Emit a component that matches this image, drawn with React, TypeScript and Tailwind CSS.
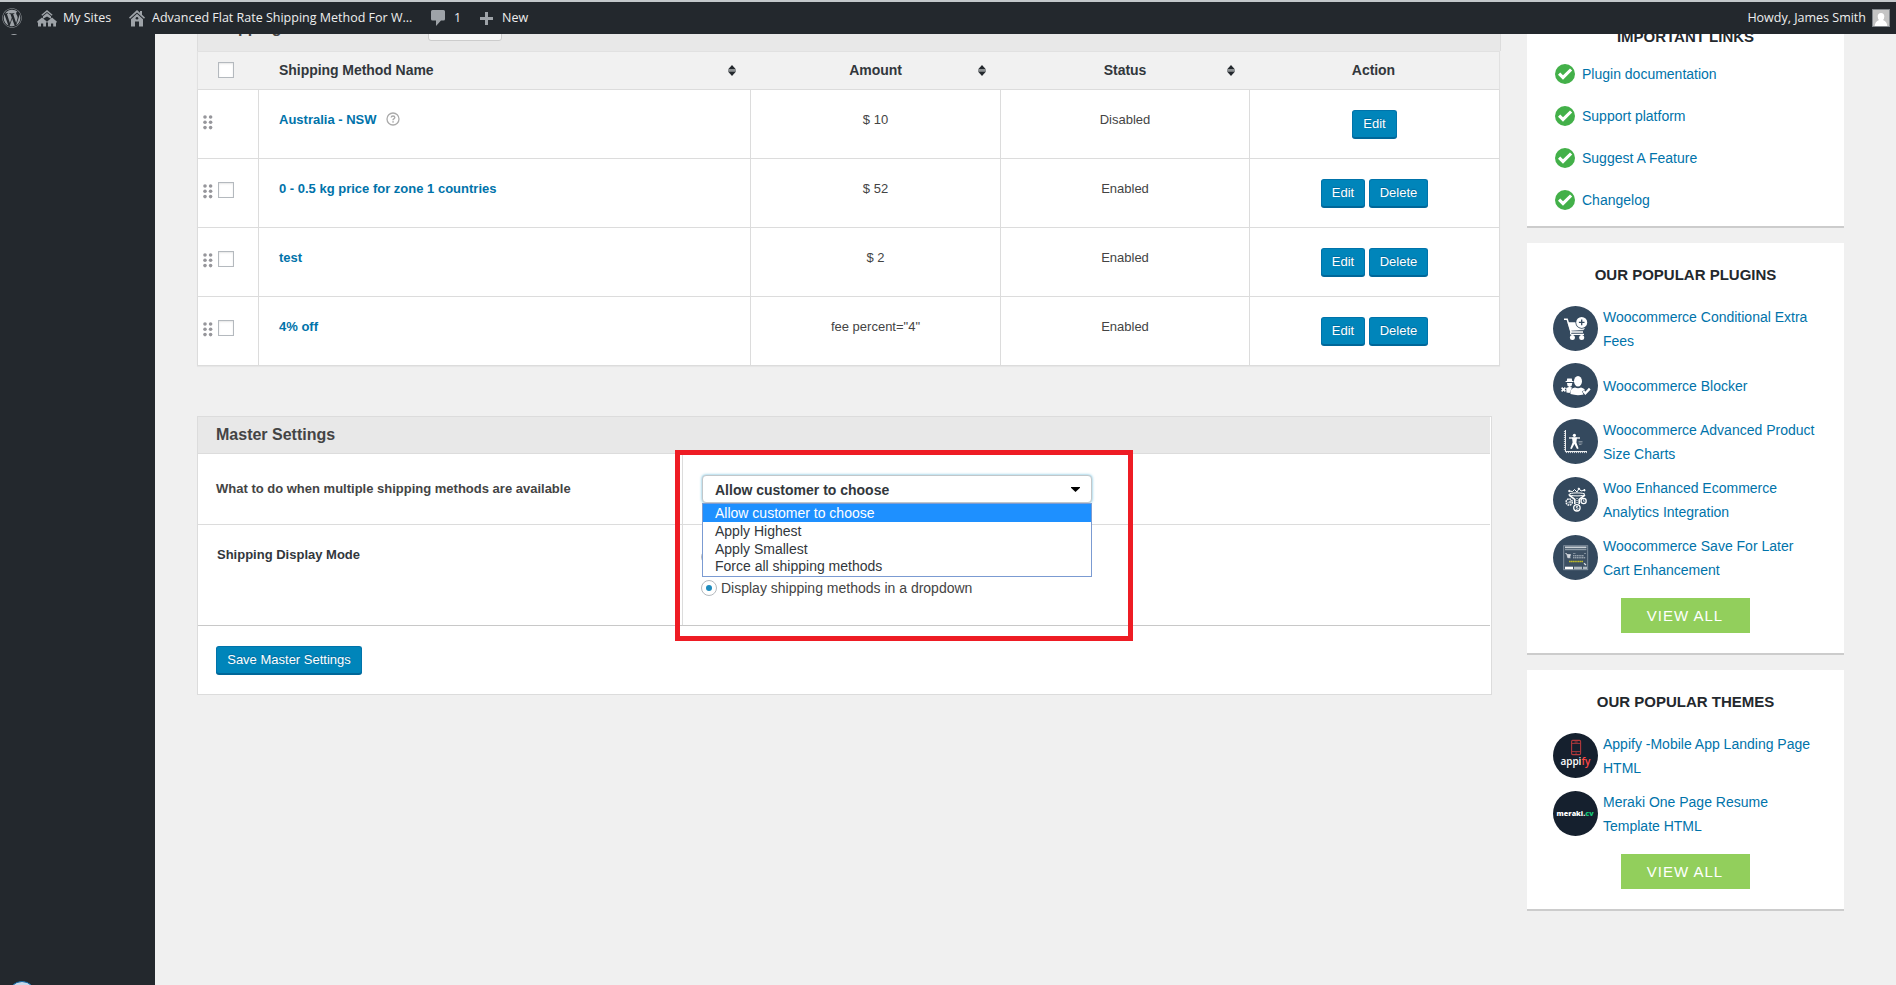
import React from "react";
import { FaWordpress } from "react-icons/fa";

type Row = { name: string; amount: string; status: string; help?: boolean };

const rows: Row[] = [
  { name: "Australia - NSW", amount: "$ 10", status: "Disabled", help: true },
  { name: "0 - 0.5 kg price for zone 1 countries", amount: "$ 52", status: "Enabled" },
  { name: "test", amount: "$ 2", status: "Enabled" },
  { name: "4% off", amount: 'fee percent="4"', status: "Enabled" },
];

const links = ["Plugin documentation", "Support platform", "Suggest A Feature", "Changelog"];
const options = ["Apply Highest", "Apply Smallest", "Force all shipping methods"];

function SitesIcon() {
  return (
    <svg width="20" height="17" viewBox="0 0 20 17" fill="#9ea3a8" className="shrink-0">
      <path d="M10 0 L15.6 4.8 L14.8 5.8 L10 2 L5.2 5.8 L4.4 4.8Z" />
      <path d="M10 3 L14 6.2 V8.8 L10 6.6 L6 8.8 V6.2Z" />
      <path d="M5 7.6 L9.8 11.6 V12.6 H9 V16.5 H6.2 V13.5 H4 V16.5 H1 V12.6 H.2 V11.6Z" />
      <path d="M15 7.6 L19.8 11.6 V12.6 H19 V16.5 H16.2 V13.5 H14 V16.5 H11 V12.6 H10.2 V11.6Z" />
    </svg>
  );
}

function HomeIcon() {
  return (
    <svg width="16" height="17" viewBox="0 0 16 17" fill="#9ea3a8" className="shrink-0">
      <path d="M8 0 L11 2.8 V1 H13 V4.7 L16 7.6 L15 8.7 L8 2.4 L1 8.7 L0 7.6Z" />
      <path d="M8 3.8 L14 9.2 V16.5 H10 V11.5 H6 V16.5 H2 V9.2Z" />
      <circle cx="8" cy="8.3" r="1.3" fill="#23282d" />
    </svg>
  );
}

function Sorter() {
  return (
    <svg width="10" height="11" viewBox="0 0 10 11" className="absolute right-[14px] top-[13px]">
      <path d="M5 0 L9 4.5 H1Z" fill="#23282d" />
      <rect x="1" y="4.5" width="8" height="2" fill="#8b8f92" />
      <path d="M1 6.5 H9 L5 11Z" fill="#23282d" />
    </svg>
  );
}

function Box() {
  return <span className="block size-4 border border-[#b4b9be] bg-white shadow-[inset_0_1px_2px_rgba(0,0,0,0.1)]" />;
}

function Grip() {
  return (
    <svg width="10" height="15" viewBox="0 0 10 15" fill="#96969b" className="absolute left-[5px] top-[25px]">
      {[2, 7.3, 12.6].map((y) => (
        <React.Fragment key={y}>
          <circle cx="2" cy={y} r="1.8" />
          <circle cx="7.6" cy={y} r="1.8" />
        </React.Fragment>
      ))}
    </svg>
  );
}

function Button({ children, className }: { children: React.ReactNode; className: string }) {
  return (
    <button
      className={`flex h-7 justify-center rounded-[3px] border border-[#0073aa] border-b-[#006799] bg-[#0085ba] text-[13px] leading-[26px] text-white shadow-[0_1px_0_#006799] [text-shadow:0_-1px_1px_#006799] ${className}`}
    >
      {children}
    </button>
  );
}

function CartGlyph() {
  return (
    <g fill="none" stroke="#fff">
      <path d="M11 13.2 H14.2 L18 26 H30" strokeWidth="1.5" />
      <path d="M15 16.5 H23.5 Q24 21.5 31.5 22 L30.5 23.8 L17.5 24.5Z" fill="#fff" strokeWidth=".5" />
      <path d="M18.3 25.5 Q16.5 28.3 19 28.4 H31" strokeWidth="1.2" />
      <circle cx="28.7" cy="16.4" r="6.3" fill="#34495e" stroke="none" />
      <circle cx="28.7" cy="16.4" r="5.5" fill="#fff" stroke="none" />
      <path d="M28.7 13.6 V19.2 M25.9 16.4 H31.5" stroke="#34495e" strokeWidth="1.3" />
      <circle cx="19.4" cy="31.6" r="2.5" fill="#fff" stroke="none" />
      <circle cx="28.7" cy="31.6" r="2.5" fill="#fff" stroke="none" />
    </g>
  );
}

function BlockerGlyph() {
  return (
    <g fill="#fff">
      <ellipse cx="25" cy="18.2" rx="4" ry="5.3" />
      <path d="M17.5 31 Q16.5 25.5 22 24.5 Q25 26 28 24.5 Q31 25 32 27 L29 28.3 L30.5 31.5 Q24 33 17.5 31Z" />
      <path d="M14.2 15.4 H18.8 L19.2 18 H20.5 V19 H12.6 V18 H13.8Z" />
      <path d="M14 20 H19.3 L18.6 23 L16.6 24 L14.6 23Z" />
      <path d="M13.2 25 L16.5 23.8 L19 24.4 L16.6 30 L13.5 29.6Z" />
      <path d="M8.6 24.6 L12.4 28.4 M12.4 24.6 L8.6 28.4" stroke="#fff" strokeWidth="1.6" />
      <path d="M30.3 28 L32.4 30.4 L36.8 25.6" stroke="#fff" strokeWidth="2.3" fill="none" />
    </g>
  );
}

function ChartGlyph() {
  return (
    <g stroke="#fff" fill="none">
      <path d="M12.4 11 V32.6 H34" strokeWidth="1" />
      <path d="M11.4 12 V32 M13 33.6 H34" strokeWidth="1" strokeDasharray="1 1" opacity=".8" />
      <circle cx="21.4" cy="16.3" r="1.6" fill="#fff" stroke="none" />
      <path d="M16 19 H27" strokeWidth="1.3" />
      <path d="M19 18.6 H24 L23.4 23.6 L25.6 29.6 L24 30 L21.4 25 L18.8 30 L17.2 29.6 L19.6 23.6Z" fill="#fff" stroke="none" />
      <path d="M25.5 22.5 H29.5 M25.5 24 H29.5 M26 25.5 H28.5" strokeWidth=".7" opacity=".55" />
    </g>
  );
}

function FunnelGlyph() {
  return (
    <g stroke="#fff" fill="none" strokeWidth="1">
      <path d="M16 14 L19.5 14.5 L21.5 12.5 L24 15 L26 11.5 L28 14 L32 13" />
      <circle cx="16.3" cy="14" r=".7" fill="#fff" />
      <circle cx="25.8" cy="11.8" r=".7" fill="#fff" />
      <circle cx="31.4" cy="13.2" r=".7" fill="#fff" />
      <ellipse cx="24" cy="17.4" rx="8" ry="1.5" />
      <path d="M16 18 L21.8 22.3 V27 M32 18 L26.2 22.3 V27" strokeWidth="1.6" />
      <path d="M24 21 V27" strokeDasharray="1 1" />
      <circle cx="16.2" cy="25" r="3.1" strokeWidth="1.5" strokeDasharray="1.7 .7" />
      <path d="M15 26.4 V25 M16.3 26.4 V24 M17.6 26.4 V23.3" strokeWidth=".7" />
      <circle cx="23.9" cy="30.8" r="3.2" strokeWidth="1.3" />
      <path d="M25 29.4 Q23 28.8 23 30.1 Q25 30.8 25 31.6 Q24.6 32.8 22.8 32.2" strokeWidth=".9" />
      <circle cx="30.6" cy="24" r="2.6" strokeWidth="1.3" />
      <path d="M30.6 22.4 V24.3 H31.6" strokeWidth=".8" />
    </g>
  );
}

function PageGlyph() {
  return (
    <g>
      <rect x="10.7" y="10.7" width="24" height="24" fill="#3d5063" stroke="#8593a1" strokeWidth=".9" />
      <rect x="12" y="11.5" width="21.4" height="1.7" fill="#c9d0d6" />
      <rect x="12" y="14" width="21.4" height="1.2" fill="#8d9aa6" />
      <path d="M12.3 18.5 H13.6 L14.8 22.8 H17.6 M14 19.5 H17.6 L16.8 22Z" stroke="#dfe3e7" fill="#dfe3e7" strokeWidth=".6" />
      <path d="M20 18.5 H22.5 M31 18.5 H33" stroke="#aeb8c1" strokeWidth=".6" />
      <path d="M20 20.8 H31 M20 22.8 H32.5" stroke="#c9d0d6" strokeWidth=".9" strokeDasharray="1.4 .4" />
      <path d="M16 26.5 H30" stroke="#bfbb28" strokeWidth="1.6" strokeDasharray="1.5 .3" />
      <path d="M31 28.3 L33 30" stroke="#dfe3e7" strokeWidth="1.2" />
      <rect x="12" y="31.7" width="8" height="2.5" fill="#fff" />
      <rect x="21" y="31.7" width="8" height="2.5" fill="#aeb8c1" />
      <rect x="30" y="31.7" width="4" height="2.5" fill="#aeb8c1" />
    </g>
  );
}

function AppifyGlyph() {
  return (
    <g>
      <rect x="18.6" y="7.4" width="9" height="14.2" rx="1" fill="none" stroke="#b3393c" strokeWidth="1.1" />
      <path d="M18.6 10.4 H27.6 M18.6 18.6 H27.6 M21.5 9 H24.7 M22.4 20.1 H23.8" stroke="#b3393c" strokeWidth=".9" />
      <text x="7.4" y="32" textLength="30" lengthAdjust="spacingAndGlyphs" fontSize="10" fontWeight="600" fill="#fff" className="font-['Open_Sans',sans-serif]">
        appi<tspan fill="#ff4745">fy</tspan>
      </text>
    </g>
  );
}

function MerakiGlyph() {
  return (
    <text x="3.6" y="25" textLength="37" lengthAdjust="spacingAndGlyphs" fontSize="7.4" fontWeight="800" fill="#fff" className="font-['Open_Sans',sans-serif]">
      meraki.<tspan fill="#14c777">cv</tspan>
    </text>
  );
}

function Item({ lines, dark, children }: { lines: string[]; dark?: boolean; children: React.ReactNode }) {
  const single = lines.length === 1;
  return (
    <li className="flex gap-[5px]">
      <svg width="45" height="45" viewBox="0 0 45 45" className={`shrink-0 ${single ? "" : "mt-px"}`}>
        <circle cx="22.5" cy="22.5" r="22.5" fill={dark ? "#15202e" : "#34495e"} />
        {children}
      </svg>
      <a className={`block text-sm leading-6 text-[#0073aa] ${single ? "pt-[11px]" : ""}`}>
        {lines.map((l) => (
          <span key={l} className="block whitespace-nowrap">{l}</span>
        ))}
      </a>
    </li>
  );
}

function Card({ title, children }: { title: string; children: React.ReactNode }) {
  return (
    <section className="border-b-2 border-[#ccc] bg-white pb-5 pt-5">
      <h3 className="text-center text-[15px] font-bold leading-6 text-[#23282d]">{title}</h3>
      <ul className="mt-[18px] flex flex-col gap-2.5 pl-[26px]">{children}</ul>
      <a className="mx-auto mt-4 block h-[35px] w-[129px] bg-[#92cf5c] pr-px text-center text-[15px] leading-9 tracking-[1px] text-white">VIEW ALL</a>
    </section>
  );
}

export default function App() {
  return (
    <div className="relative flex h-[985px] w-[1896px] flex-col overflow-hidden bg-[#f0f0f0] font-['Liberation_Sans',Arial,sans-serif] text-[13px] text-[#444]">
      <header className="flex h-[34px] shrink-0 items-center border-t-2 border-[#c3c8cb] bg-[#23282d] pl-[2px] pr-[6px] font-['Open_Sans',sans-serif] text-[12.5px] text-[#eee]">
        <FaWordpress size={20} color="#9ea3a8" className="shrink-0" />
        <div className="ml-[15px] flex w-[92px] items-center gap-1.5">
          <SitesIcon />
          <span className="whitespace-nowrap pt-px">My Sites</span>
        </div>
        <div className="flex w-[302px] items-center gap-[7px]">
          <HomeIcon />
          <span className="whitespace-nowrap pt-px">Advanced Flat Rate Shipping Method For W...</span>
        </div>
        <div className="flex w-[49px] items-center gap-[9px]">
          <svg width="14" height="16" viewBox="0 0 14 16" fill="#9ea3a8">
            <path d="M1.5 0 H12.5 Q14 0 14 1.5 V9 Q14 10.5 12.5 10.5 H10 L5 16 V10.5 H1.5 Q0 10.5 0 9 V1.5 Q0 0 1.5 0Z" />
          </svg>
          <span className="pt-px">1</span>
        </div>
        <div className="flex items-center gap-[9px]">
          <svg width="13" height="13" viewBox="0 0 13 13" fill="#9ea3a8">
            <path d="M5 0 H8 V5 H13 V8 H8 V13 H5 V8 H0 V5 H5Z" />
          </svg>
          <span className="pt-px">New</span>
        </div>
        <div className="ml-auto flex items-center gap-1.5">
          <span className="pt-px">Howdy, James Smith</span>
          <svg width="18" height="18" viewBox="0 0 18 18">
            <rect x=".5" y=".5" width="17" height="17" fill="#c4c4c4" stroke="#82878c" />
            <path d="M9 4 Q12.3 4 12.3 7.6 Q12.2 10 11 11 Q15 12.5 15.3 17 H2.7 Q3 12.5 7 11 Q5.8 10 5.7 7.6 Q5.7 4 9 4Z" fill="#fff" />
          </svg>
        </div>
      </header>

      <div className="flex min-h-0 flex-1">
        <aside className="w-[155px] shrink-0 overflow-hidden bg-[#23282d]">
          <div className="-mt-[17px] flex h-[18px] items-end gap-4 pl-2 font-['Open_Sans',sans-serif] text-[13px] leading-[18px] text-[#a0a5aa]">
            <span className="block size-3 rounded-full bg-[#a0a5aa]" />
            <span>Collapse menu</span>
          </div>
        </aside>

        <main className="ml-[42px] w-[1304px] shrink-0">
          <div className="flex h-[17px] items-end overflow-hidden border-x border-[#dcdcdc] bg-[#e8e8e8] pl-[15px]">
            <h2 className="mb-[13px] w-[215px] text-base font-bold leading-5">Shipping Methods</h2>
            <span className="mb-[10px] h-7 w-[74px] rounded-[3px] border border-[#ccc] bg-[#f7f7f7]" />
          </div>
          <div className="w-[1303px] shadow-[0_1px_1px_rgba(0,0,0,0.04)]">
            <div className="grid h-[39px] grid-cols-[61px_492px_250px_249px_249px] border border-[#e1e1e1] border-b-[#dcdcdc] bg-[#f1f1f1] text-sm font-bold leading-[37px] tracking-[-0.05px] text-[#32373c]">
              <div className="pl-5 pt-2.5"><Box /></div>
              <div className="relative pl-5">Shipping Method Name<Sorter /></div>
              <div className="relative pr-px text-center">Amount<Sorter /></div>
              <div className="relative pr-px text-center">Status<Sorter /></div>
              <div className="pr-0.5 text-center">Action</div>
            </div>
            {rows.map((r) => (
              <div key={r.name} className="grid h-[69px] grid-cols-[62px_492px_250px_249px_250px] border-b border-[#dcdcdc] bg-white leading-5">
                <div className="relative border-x border-[#dcdcdc]">
                  <Grip />
                  {!r.help && <div className="pl-5 pt-[23px]"><Box /></div>}
                </div>
                <div className="flex items-start gap-[9px] border-r border-[#dcdcdc] pl-5 pt-5">
                  <a className="font-bold text-[#0073aa]">{r.name}</a>
                  {r.help && (
                    <svg width="14" height="14" viewBox="0 0 14 14" className="mt-[2px]">
                      <circle cx="7" cy="7" r="6" fill="none" stroke="#aaa" strokeWidth="1.3" />
                      <path d="M5.2 5.5 Q5.3 4 7 4 Q8.8 4 8.8 5.5 Q8.8 6.3 7.8 6.9 Q7 7.4 7 8.3" fill="none" stroke="#aaa" strokeWidth="1.4" />
                      <rect x="6.3" y="9.2" width="1.5" height="1.4" fill="#aaa" />
                    </svg>
                  )}
                </div>
                <div className="border-r border-[#dcdcdc] pt-5 text-center">{r.amount}</div>
                <div className="border-r border-[#dcdcdc] pt-5 text-center">{r.status}</div>
                <div className="flex justify-center gap-1 border-r border-[#dcdcdc] pt-5">
                  <Button className={r.help ? "w-[45px]" : "w-11"}>Edit</Button>
                  {!r.help && <Button className="w-[59px]">Delete</Button>}
                </div>
              </div>
            ))}
          </div>

          <section className="relative mt-[50px] h-[279px] w-[1295px] border border-[#dcdcdc] bg-white pr-[1px]">
            <h2 className="h-[37px] border-b border-[#dcdcdc] bg-[#e8e8e8] pl-[18px] text-base font-bold leading-[35px]">Master Settings</h2>
            <div className="flex h-[71px] border-b border-[#dcdcdc]">
              <div className="w-[485px] border-r border-[#dcdcdc] pl-[18px] pt-[25px] font-bold leading-5">What to do when multiple shipping methods are available</div>
              <div className="pl-[19px] pt-[21px]">
                <div className="relative flex h-7 w-[390px] items-center justify-between rounded-[4px] border border-[#c2c7ca] bg-white pl-3 pr-[11px] text-sm font-bold text-[#32373c] shadow-[0_0_3px_#5fb6d8]">
                  <span className="relative top-[1px]">Allow customer to choose</span>
                  <svg width="9" height="5" viewBox="0 0 9 5"><path d="M0 0 H9 V.8 L4.5 5 L0 .8Z" fill="#000" /></svg>
                  <ul className="absolute -left-px top-[27px] z-10 h-[74px] w-[390px] border border-[#7b9bd2] bg-white font-normal">
                    <li className="h-[18px] bg-[#1e90ff] pl-3 leading-[18px] text-white">Allow customer to choose</li>
                    {options.map((o) => (
                      <li key={o} className="h-[17.6px] pl-3 leading-[18px]">{o}</li>
                    ))}
                  </ul>
                </div>
              </div>
            </div>
            <div className="flex h-[101px] border-b border-[#c8c8c8]">
              <div className="w-[485px] border-r border-[#dcdcdc] pl-[19px] pt-5 font-bold leading-5 text-[#32373c]">Shipping Display Mode</div>
              <div className="pl-[18px] pt-6">
                <span className="block size-4 rounded-full border border-[#b4b9be]" />
                <div className="mt-3.5 flex items-center gap-1 text-sm leading-[18px]">
                  <span className="flex size-4 items-center justify-center rounded-full border border-[#b4b9be] bg-white">
                    <span className="size-1.5 rounded-full bg-[#1e8cbe]" />
                  </span>
                  Display shipping methods in a dropdown
                </div>
              </div>
            </div>
            <div className="pl-[18px] pt-5">
              <Button className="w-[146px]">Save Master Settings</Button>
            </div>
            <div className="pointer-events-none absolute left-[477px] top-[33px] z-20 h-[191px] w-[458px] border-[5px] border-[#ee1c24]" />
          </section>
        </main>

        <aside className="ml-[26px] flex w-[317px] shrink-0 flex-col overflow-hidden">
          <section className="mb-[15px] border-b-2 border-[#ccc] bg-white pb-[14px]">
            <h3 className="-mt-[9px] text-center text-[15px] font-bold leading-6 text-[#23282d]">IMPORTANT LINKS</h3>
            <ul className="mt-[13px] flex flex-col gap-[18px] pl-7">
              {links.map((l) => (
                <li key={l} className="flex h-6 items-center gap-[7px] text-sm leading-6 text-[#0073aa]">
                  <svg width="20" height="20" viewBox="0 0 20 20">
                    <circle cx="10" cy="10" r="10" fill="#43b049" />
                    <path d="M3 10.8 L5.2 8.6 L8 11.2 L15 4.4 L17.2 6.6 L8 15.8Z" fill="#fff" />
                  </svg>
                  <a>{l}</a>
                </li>
              ))}
            </ul>
          </section>
          <div className="flex flex-col gap-[15px]">
            <Card title="OUR POPULAR PLUGINS">
              <Item lines={["Woocommerce Conditional Extra", "Fees"]}><CartGlyph /></Item>
              <Item lines={["Woocommerce Blocker"]}><BlockerGlyph /></Item>
              <Item lines={["Woocommerce Advanced Product", "Size Charts"]}><ChartGlyph /></Item>
              <Item lines={["Woo Enhanced Ecommerce", "Analytics Integration"]}><FunnelGlyph /></Item>
              <Item lines={["Woocommerce Save For Later", "Cart Enhancement"]}><PageGlyph /></Item>
            </Card>
            <Card title="OUR POPULAR THEMES">
              <Item dark lines={["Appify -Mobile App Landing Page", "HTML"]}><AppifyGlyph /></Item>
              <Item dark lines={["Meraki One Page Resume", "Template HTML"]}><MerakiGlyph /></Item>
            </Card>
          </div>
        </aside>
      </div>

      <svg width="26" height="4" viewBox="0 0 26 4" className="absolute bottom-0 left-[9px]">
        <circle cx="13" cy="14" r="13.5" fill="#c9d9ea" stroke="#1168a8" strokeWidth="1" />
      </svg>
    </div>
  );
}
